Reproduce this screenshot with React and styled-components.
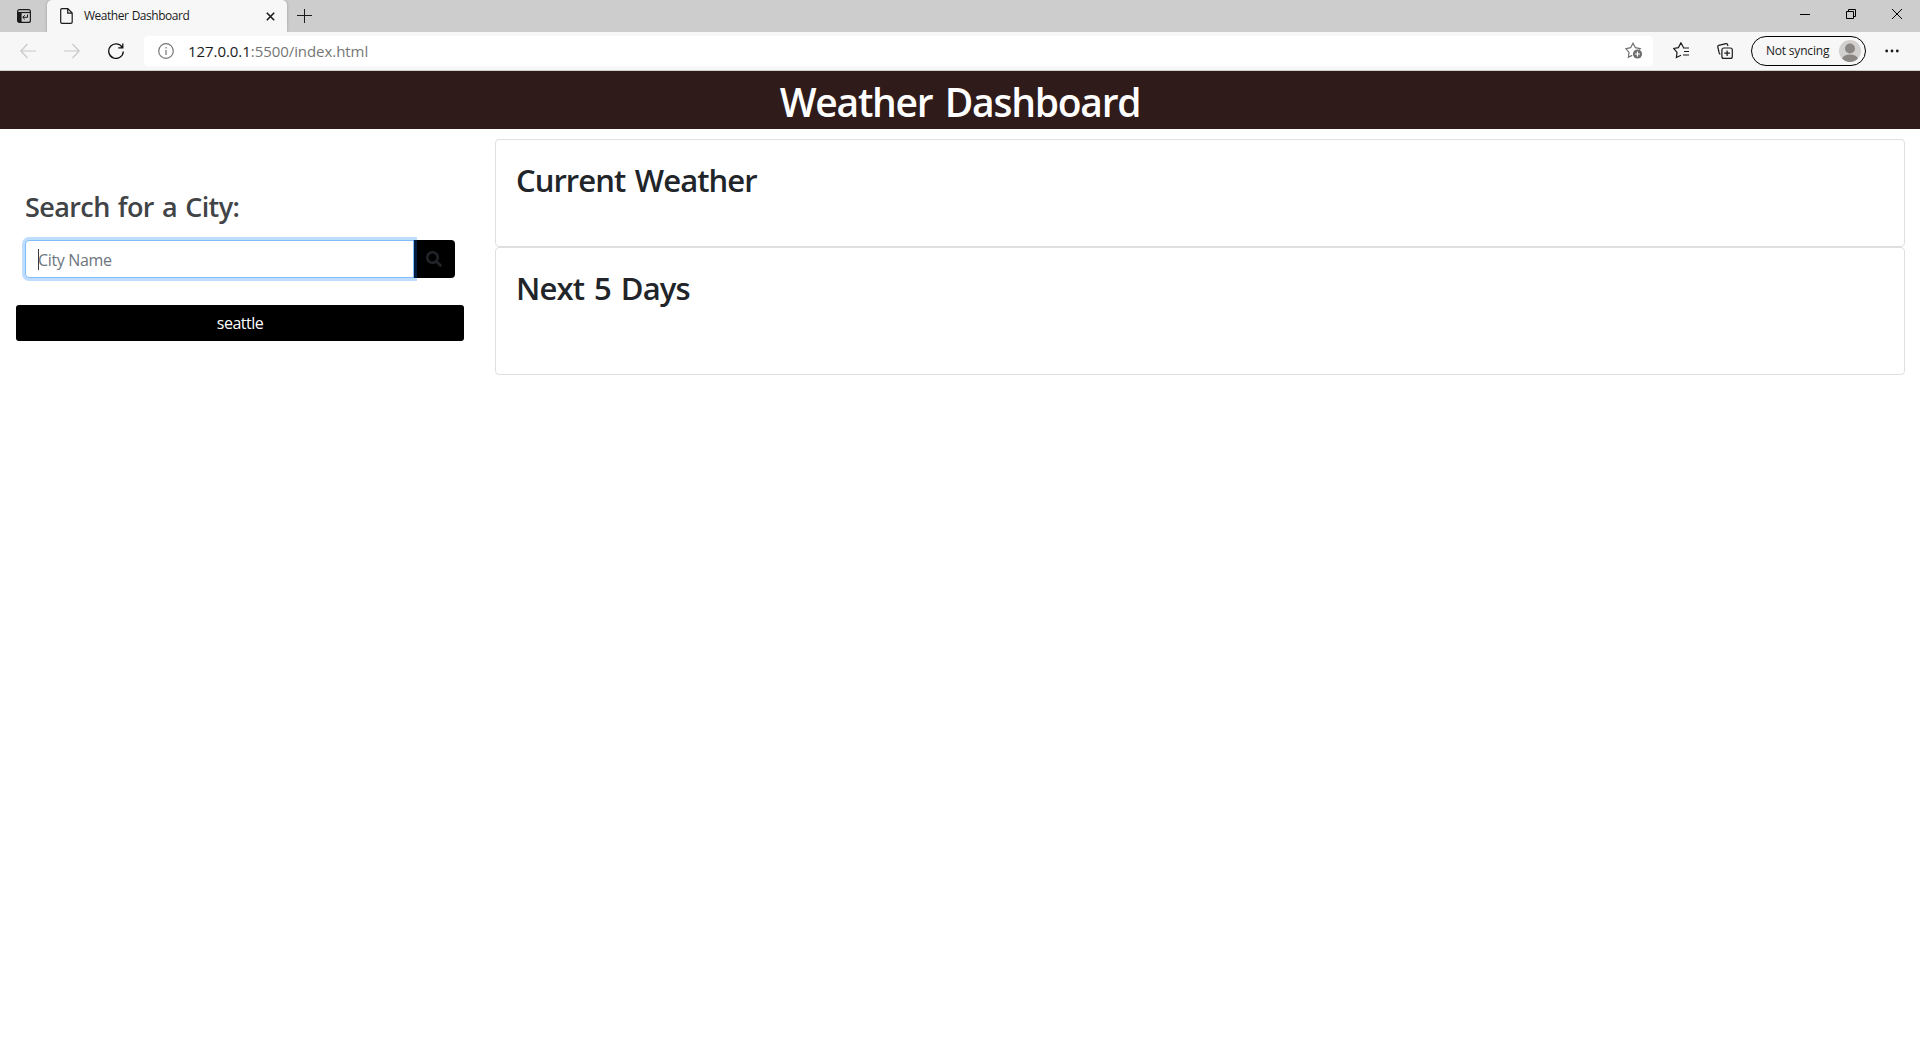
import React from "react";
import styled, { createGlobalStyle, css } from "styled-components";

const GlobalStyle = createGlobalStyle`
  *, *::before, *::after { box-sizing: border-box; }
  html, body, #root { height: 100%; }
  body {
    margin: 0;
    overflow: hidden;
    background: #fff;
    color: #212529;
    font-family: "Open Sans", "Noto Sans", sans-serif;
    font-size: 16px;
    line-height: 1.5;
  }
  svg { display: block; flex: none; }
`;

const Window = styled.div`
  display: flex;
  flex-direction: column;
  height: 1040px;
`;

const TabStrip = styled.div`
  display: flex;
  height: 32px;
  flex: none;
  background: #cdcdcd;
`;

const TabActions = styled.div`
  display: flex;
  width: 47px;
  padding: 9px 0 0 17px;
`;

const Tab = styled.div`
  position: relative;
  display: flex;
  align-items: center;
  width: 240px;
  height: 32px;
  padding: 0 12px 0 13px;
  border-radius: 5px 5px 0 0;
  background: #f7f7f7;
  box-shadow: 0 0 3px rgba(0, 0, 0, 0.25);
  clip-path: inset(0 -4px 0 -4px);
`;

const TabTitle = styled.span`
  flex: 1;
  margin-left: 11px;
  font-size: 12px;
  line-height: 16px;
  letter-spacing: -0.48px;
  word-spacing: 0.6px;
  color: #1b1b1b;
`;

const NewTab = styled.div`
  padding: 9px 0 0 10px;
`;

const WindowControls = styled.div`
  display: flex;
  margin-left: auto;
`;

const Control = styled.div`
  display: grid;
  place-items: center;
  width: 46px;
  height: 28px;
`;

const Toolbar = styled.div`
  display: flex;
  align-items: center;
  flex: none;
  height: 39px;
  padding-bottom: 1px;
  background: #f7f7f7;
  border-bottom: 1px solid #cdd0cd;
`;

const NavIcons = styled.div`
  display: flex;
  align-items: center;
  gap: 28px;
  width: 144px;
  padding-left: 20px;
`;

const AddressBar = styled.div`
  display: flex;
  align-items: center;
  width: 1509px;
  height: 30px;
  padding: 0 10px 0 14px;
  border-radius: 4px;
  background: #fff;
`;

const Url = styled.span`
  flex: 1;
  margin-left: 14px;
  font-size: 15px;
  line-height: 20px;
  letter-spacing: -0.06px;
  color: #767676;
`;

const Host = styled.span`
  color: #1b1b1b;
`;

const ToolbarActions = styled.div`
  display: flex;
  align-items: center;
  padding-left: 20px;
`;

const Profile = styled.div`
  display: flex;
  align-items: center;
  justify-content: space-between;
  width: 115px;
  height: 30px;
  margin: 0 19px 0 18px;
  padding: 0 4px 0 14px;
  border: 1px solid #000;
  border-radius: 15px;
  font-size: 12px;
  line-height: 16px;
  letter-spacing: -0.2px;
  color: #1b1b1b;
`;

const Banner = styled.header`
  display: flex;
  justify-content: center;
  flex: none;
  height: 58px;
  padding-top: 7px;
  background: #2f1b1a;
`;

const headingBase = css`
  margin: 0;
  font-weight: 600;
  white-space: nowrap;
`;

const BannerTitle = styled.h1`
  ${headingBase}
  font-size: 39px;
  line-height: 48px;
  letter-spacing: -1.25px;
  word-spacing: 3.5px;
  color: #fff;
`;

const Main = styled.main`
  display: flex;
  align-items: flex-start;
  padding-top: 10px;
`;

const Sidebar = styled.aside`
  width: 495px;
  padding: 51px 31px 0 16px;
`;

const SearchForm = styled.form`
  padding: 0 9px;
`;

const SearchLabel = styled.h3`
  ${headingBase}
  margin-bottom: 17px;
  font-size: 27px;
  line-height: 33px;
  letter-spacing: -0.6px;
  word-spacing: 1.7px;
  color: #414446;
`;

const InputGroup = styled.div`
  display: flex;
  height: 38px;
`;

const CityField = styled.div`
  position: relative;
  z-index: 1;
  display: flex;
  align-items: center;
  width: 389px;
  padding: 2px 12px 0;
  border: 1px solid #80bdff;
  border-radius: 4px 0 0 4px;
  background: #fff;
  box-shadow: 0 0 0 3px rgba(0, 123, 255, 0.25);
  letter-spacing: -0.35px;
  color: #6c757d;
`;

const Caret = styled.i`
  width: 1px;
  height: 21px;
  margin: 0 -1px 2px 0;
  background: #343a40;
`;

const SearchButton = styled.button`
  display: grid;
  place-items: center;
  width: 42px;
  margin-left: -1px;
  padding: 0;
  border: 0;
  border-radius: 0 4px 4px 0;
  background: #000;
  color: #212529;
`;

const HistoryButton = styled.button`
  display: block;
  width: 448px;
  height: 36px;
  margin-top: 27px;
  padding: 0;
  border: 0;
  border-radius: 3px;
  background: #000;
  font: inherit;
  letter-spacing: -0.5px;
  color: #fff;
`;

const Results = styled.section`
  width: 1410px;
`;

const Card = styled.article`
  height: ${(p) => p.$height}px;
  padding: 21px 20px;
  border: 1px solid #dfdfdf;
  border-radius: 4px;
  background: #fff;
`;

const CardTitle = styled.h2`
  ${headingBase}
  font-size: 31px;
  line-height: 38px;
  letter-spacing: ${(p) => p.$spacing}px;
  word-spacing: 2.5px;
`;

const Icon = ({ w = 16, h = w, color = "#1b1b1b", width = 1.2, children }) => (
  <svg width={w} height={h} viewBox={`0 0 ${w} ${h}`} fill="none" stroke={color} strokeWidth={width}>
    {children}
  </svg>
);

export default function App() {
  return (
    <>
      <GlobalStyle />
      <Window>
        <TabStrip>
          <TabActions>
            <Icon w={14}>
              <rect x="0.6" y="0.6" width="12.8" height="12.8" rx="2" />
              <path d="M1 3.5H13" />
              <path d="M1 3.5H4V13H2L1 12Z" fill="#1b1b1b" />
              <path d="M10.5 5.5V8.3H6M7.8 6.2L5.7 8.3L7.8 10.4" strokeWidth="1" />
            </Icon>
          </TabActions>
          <Tab>
            <Icon w={13} h={16}>
              <path d="M2 0.6H7.8L12.2 5V14a1.3 1.3 0 0 1-1.3 1.3H2A1.3 1.3 0 0 1 0.7 14V1.9A1.3 1.3 0 0 1 2 0.6ZM7.7 0.8V5.2H12" />
            </Icon>
            <TabTitle>Weather Dashboard</TabTitle>
            <Icon w={9} width={1.6}>
              <path d="M0.8 0.8L8.2 8.2M8.2 0.8L0.8 8.2" />
            </Icon>
          </Tab>
          <NewTab>
            <Icon w={15} h={14} width={1}>
              <path d="M7.5 0V14M0 6.5H15" />
            </Icon>
          </NewTab>
          <WindowControls>
            <Control>
              <Icon w={10} width={1} color="#000"><path d="M0 5.5H10" /></Icon>
            </Control>
            <Control>
              <Icon w={10} width={1} color="#000">
                <path d="M0.5 2.5H7.5V9.5H0.5ZM2.5 2.5V0.5H9.5V7.5H7.5" />
              </Icon>
            </Control>
            <Control>
              <Icon w={10} width={1} color="#000"><path d="M0 0L10 10M10 0L0 10" /></Icon>
            </Control>
          </WindowControls>
        </TabStrip>

        <Toolbar>
          <NavIcons>
            <Icon w={16} color="#c8c8c8"><path d="M16 8H1M7.5 1L0.8 8L7.5 15" /></Icon>
            <Icon w={16} color="#c8c8c8"><path d="M0 8H15M8.5 1L15.2 8L8.5 15" /></Icon>
            <Icon w={16} color="#111" width={1.3}>
              <path d="M14.4 4.6A7.3 7.3 0 1 0 15.3 8.5M14.8 0.4V4.8H10.2" />
            </Icon>
          </NavIcons>
          <AddressBar>
            <Icon w={16} color="#767676">
              <circle cx="8" cy="8" r="7.3" />
              <path d="M8 7V12M8 4V5.6" />
            </Icon>
            <Url><Host>127.0.0.1</Host>:5500/index.html</Url>
            <Icon w={18} h={17} color="#6e6e6e">
              <path d="M7.2 13.4L3.4 15.3L4 10.4L0.8 6.6L5.6 5.7L8 1.2L10.4 5.7L15.2 6.6L14.2 7.6" />
              <circle cx="12.5" cy="12" r="4.6" fill="#6e6e6e" stroke="none" />
              <path d="M12.5 9.5V14.5M10 12H15" stroke="#fff" />
            </Icon>
          </AddressBar>
          <ToolbarActions>
            <Icon w={44} h={17}>
              <path d="M10.5 5.5L7.9 0.8L5.4 5.6L0.7 6.5L4 10.4L3.4 15.5L8 13.3M10 6H16M11 9.5H16M10 13H16" />
            </Icon>
            <Icon w={16}>
              <rect x="4.9" y="5" width="10.4" height="10.4" rx="2" />
              <path d="M10.1 7.5V13M7.3 10.2H12.9M11 3L10.4 1.3Q10 0.4 9 0.7L1.7 2.4Q0.5 2.8 0.8 4L2.2 10Q2.5 11 3.3 11.3" />
            </Icon>
            <Profile>
              Not syncing
              <Icon w={22}>
                <circle cx="11" cy="11" r="11" fill="#d2d0ce" stroke="none" />
                <circle cx="11" cy="8.5" r="5" fill="#8a8684" stroke="none" />
                <path d="M3 18.5Q5 14.5 11 14.5T19 18.5A11 11 0 0 1 3 18.5Z" fill="#8a8684" stroke="none" />
              </Icon>
            </Profile>
            <Icon w={14} h={4}>
              <g fill="#1b1b1b" stroke="none">
                <circle cx="1.7" cy="2" r="1.4" /><circle cx="7" cy="2" r="1.4" /><circle cx="12.3" cy="2" r="1.4" />
              </g>
            </Icon>
          </ToolbarActions>
        </Toolbar>

        <Banner>
          <BannerTitle>Weather Dashboard</BannerTitle>
        </Banner>

        <Main>
          <Sidebar>
            <SearchForm>
              <SearchLabel>Search for a City:</SearchLabel>
              <InputGroup>
                <CityField><Caret />City Name</CityField>
                <SearchButton type="button" aria-label="Search">
                  <svg width="16" height="16" viewBox="0 0 512 512" fill="currentColor">
                    <path d="M505 442.700L405.300 343c-4.500-4.500-10.600-7-17-7H372c27.600-35.300 44-79.700 44-128C416 93.100 322.900 0 208 0S0 93.100 0 208s93.100 208 208 208c48.300 0 92.700-16.400 128-44v16.300c0 6.400 2.500 12.500 7 17l99.700 99.700c9.400 9.400 24.600 9.400 33.900 0l28.300-28.300c9.400-9.400 9.400-24.600.1-34zM208 336c-70.700 0-128-57.200-128-128 0-70.700 57.200-128 128-128 70.700 0 128 57.200 128 128 0 70.700-57.200 128-128 128z" />
                  </svg>
                </SearchButton>
              </InputGroup>
            </SearchForm>
            <HistoryButton type="button">seattle</HistoryButton>
          </Sidebar>
          <Results>
            <Card $height={108}><CardTitle $spacing={-0.95}>Current Weather</CardTitle></Card>
            <Card $height={128}><CardTitle $spacing={-0.8}>Next 5 Days</CardTitle></Card>
          </Results>
        </Main>
      </Window>
    </>
  );
}
